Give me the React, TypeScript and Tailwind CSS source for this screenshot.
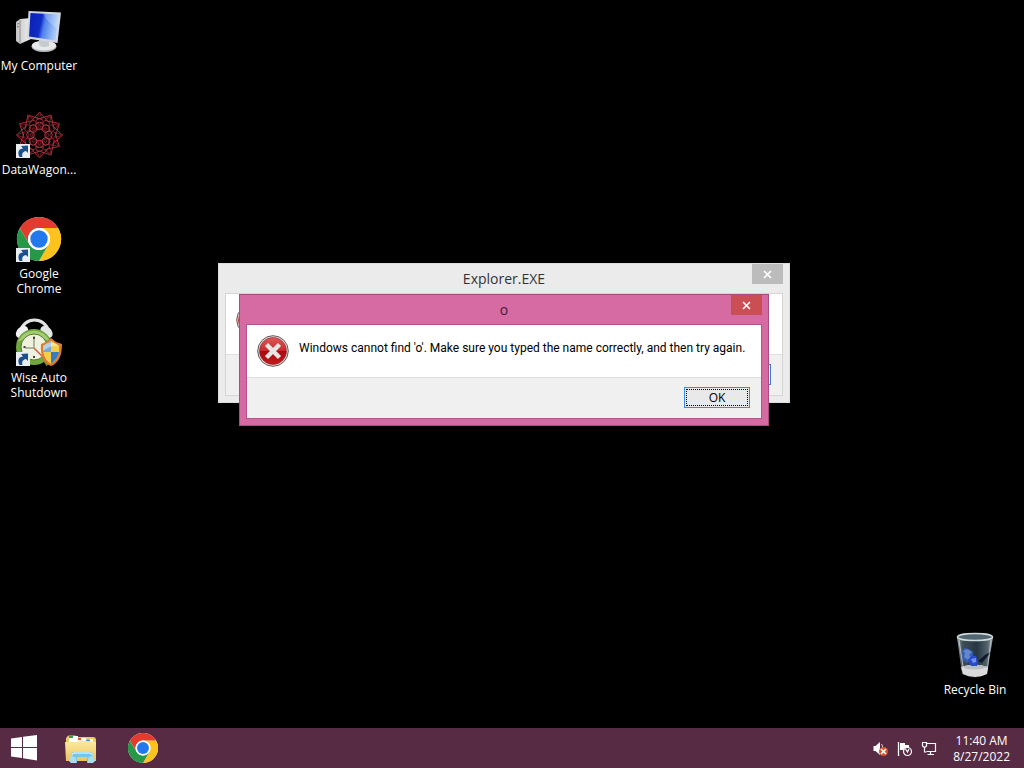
import type { ReactNode } from 'react';

function ShortcutArrow() {
  return (
    <g>
      <rect x="1" y="32" width="14" height="14" fill="#e9eef3" />
      <path d="M4.500 45C2 40 4 36.500 8 36.500L6 34L13 33.500L13 41L11 39C8 39.500 6.500 41.500 7.500 45Z" fill="#1d4f8c" />
    </g>
  );
}

function ComputerIcon() {
  return (
    <svg viewBox="0 0 48 48" className="h-12 w-12" aria-hidden="true">
      <defs>
        <linearGradient id="screen" x1="0" y1="0" x2="1" y2="0.2">
          <stop offset="0" stopColor="#0a1fb4" />
          <stop offset="0.45" stopColor="#0f2cc4" />
          <stop offset="0.58" stopColor="#4f80ea" />
          <stop offset="1" stopColor="#a9cdfb" />
        </linearGradient>
        <linearGradient id="tower" x1="0" y1="0" x2="1" y2="0">
          <stop offset="0" stopColor="#c4c4c4" />
          <stop offset="1" stopColor="#f0f0f0" />
        </linearGradient>
      </defs>
      <path d="M1 14L5 11L16 10L16 31L5 36L1 33Z" fill="url(#tower)" />
      <path d="M5 12V36" stroke="#8e8e8e" strokeWidth="1" />
      <path d="M2 16L4 15.500M2 19L4 18.500" stroke="#777" />
      <ellipse cx="29" cy="38.500" rx="12.500" ry="5.500" fill="#b9bcbf" />
      <ellipse cx="29" cy="37.500" rx="12" ry="4.800" fill="#e6e8e9" />
      <path d="M24 31L34 32L34 38C30 40 26 39 24 37Z" fill="#c8cbce" />
      <path d="M13.500 3L46 4.500L42.500 35L12 30.500Z" fill="#d3d7e4" />
      <path d="M15.500 5L43.500 6.500L40.500 32.500L14 28.500Z" fill="url(#screen)" />
      <path d="M28 5.700L43.500 6.500L42 20Q34 16 28 5.700Z" fill="#fff" opacity=".22" />
    </svg>
  );
}

const rosetteAngles = [0, 30, 60, 90, 120, 150, 180, 210, 240, 270, 300, 330];

function RosetteIcon() {
  return (
    <svg viewBox="0 0 48 48" className="h-12 w-12 overflow-visible" aria-hidden="true">
      <g fill="none" stroke="#b8323f" strokeWidth="0.9" transform="translate(24.5 23)">
        {rosetteAngles.map((a) => (
          <g key={a} transform={`rotate(${a})`}>
            <path d="M-10-12L0-23L10-12" />
            <path d="M0-23L-5-9M0-23L5-9" stroke="#7d1f2b" />
          </g>
        ))}
        {[0, 45, 90, 135, 180, 225, 270, 315].map((a) => (
          <g key={a} transform={`rotate(${a})`}>
            <circle r="3.800" cx="0" cy="-9" stroke="#c03c48" />
            <circle r="1.500" cx="0" cy="-8" stroke="#93232f" />
          </g>
        ))}
      </g>
      <circle cx="24.500" cy="23" r="3.500" fill="#090203" />
      <ShortcutArrow />
    </svg>
  );
}

function ChromeArt() {
  return (
    <g>
      <circle cx="24" cy="23" r="22" fill="#fff" />
      <path d="M24 12H43.100A22 22 0 0 1 24 45L33.500 28.500A11 11 0 0 0 24 12Z" fill="#fcc31e" />
      <path d="M4.900 12L14.500 28.500A11 11 0 0 0 33.500 28.500L24 45A22 22 0 0 1 4.900 12Z" fill="#269847" />
      <path d="M24 12H43.100A22 22 0 0 0 4.900 12L14.500 28.500A11 11 0 0 1 24 12Z" fill="#e33b2e" />
      <circle cx="24" cy="23" r="11" fill="#fff" />
      <circle cx="24" cy="23" r="8.700" fill="#2478ed" />
    </g>
  );
}

function ClockIcon() {
  return (
    <svg viewBox="0 0 48 48" className="h-12 w-12 overflow-visible" aria-hidden="true">
      <path d="M5 12C9-4 30-4 34 12" fill="none" stroke="#dfe3e4" strokeWidth="3" />
      <ellipse cx="7" cy="12" rx="7" ry="5" transform="rotate(-42 7 12)" fill="#f1f3f3" />
      <ellipse cx="31.500" cy="12" rx="7" ry="5" transform="rotate(42 31.500 12)" fill="#e3e7e7" />
      <path d="M30 40L33 45" stroke="#668e35" strokeWidth="4" />
      <circle cx="19" cy="27" r="18" fill="#72a63e" />
      <path d="M3 22A17 17 0 0 1 35 22Q20 12 3 22Z" fill="#a4cc73" />
      <circle cx="19" cy="27" r="13" fill="#f1f1df" stroke="#557d2e" />
      <path d="M19 16V28H10" fill="none" stroke="#96a48b" strokeWidth="1.500" />
      <path d="M19 28L28 37" stroke="#d35c45" strokeWidth="1.500" />
      <path d="M19 17V19M8.500 27H10.500M19 36V38M28 27H30" stroke="#444" strokeWidth="2" />
      <path d="M36 18L41 22L47 24C47 35 44 43 36 46C29 43 25 36 26 24L31 22Z" fill="#df7c28" />
      <path d="M36 21L44 26C44 34 42 40 36 43.500C30 40 28 34 28 26Z" fill="#f6e8ab" />
      <path d="M36 21L28 26V32H36ZM36 32V43.500C41 40 43 36 44 32Z" fill="#79a9d2" />
      <path d="M36 32V43.500C41 40 43 36 44 32Z" fill="#3979bd" />
      <path d="M36 21L44 26V32H36ZM28.500 32H36V43.500C31 40 29 36 28.500 32Z" fill="#f4ce48" />
      <path d="M28 26Q36 19 44 26Q36 25 28 31Z" fill="#fff" opacity=".45" />
      <ShortcutArrow />
    </svg>
  );
}

function BinIcon() {
  return (
    <svg viewBox="0 0 48 48" className="h-12 w-12" aria-hidden="true">
      <defs>
        <linearGradient id="glass" x1="0" y1="0" x2="1" y2="0">
          <stop offset="0" stopColor="#9ba6ab" />
          <stop offset=".16" stopColor="#3f4d57" />
          <stop offset=".55" stopColor="#263642" />
          <stop offset=".84" stopColor="#52616b" />
          <stop offset="1" stopColor="#a4abb0" />
        </linearGradient>
      </defs>
      <path d="M6 5L11 42Q24 49 36 42L42 5Z" fill="url(#glass)" />
      <ellipse cx="24" cy="5" rx="17.500" ry="3.500" fill="#526772" stroke="#d0dadd" strokeWidth="1.500" />
      <path d="M10 35Q23 30 37 35L36 42Q24 48 12 42Z" fill="#dadada" />
      <path d="M10 35Q23 30 37 35Q23 40 10 35Z" fill="#b9bec2" />
      <path d="M10 20L13 16L18 17L22 20L22 27L16 31L10 27Z" fill="#365cad" />
      <path d="M12 19L16 17L21 20L18 23L22 26L17 28L13 25L14 21Z" fill="#6287ce" />
      <path d="M17 28L20 24L25 24L27 29L26 34L20 34Z" fill="#294dca" />
      <path d="M20 27L25 26L25 30L22 31Z" fill="#6f92ee" />
      <path d="M41 19L34 23L27 29L31 31Z" fill="#101929" />
      <path d="M8 8L13 41" stroke="#dce3e6" strokeWidth="1" opacity=".7" />
      <path d="M40 8L36 39" stroke="#dce3e6" strokeWidth="1" opacity=".6" />
    </svg>
  );
}

function FolderIcon() {
  return (
    <svg viewBox="0 0 34 32" className="h-8 w-[34px]" aria-hidden="true">
      <defs>
        <linearGradient id="folder" x1="0" y1="0" x2="0" y2="1">
          <stop offset="0" stopColor="#ffeaa2" />
          <stop offset="1" stopColor="#e7c560" />
        </linearGradient>
      </defs>
      <path d="M3 5Q3 3.500 5 3.500H11L14 5H29Q32 5 32 8V28H2V6Z" fill="#e9c968" />
      <path d="M5 4H14V10H5Z" fill="#fff" />
      <path d="M5 4H9V6H5Z" fill="#3d9a44" />
      <path d="M13 6H22V10H13Z" fill="#fff8e0" />
      <path d="M14 6H17V8H14Z" fill="#d85b34" />
      <path d="M18 7H29V11H18Z" fill="#fff" />
      <path d="M22 7.500H26V9.500H22Z" fill="#4294cc" />
      <path d="M1 10H14L16 8.500L32 10L32 29H2Z" fill="url(#folder)" />
      <path d="M7 23Q7 20 10 20H26Q29 20 29 23V31H23V25H13V31H7Z" fill="#79c5e5" />
      <path d="M8 23Q8 21 11 21H25Q28 21 28 23" fill="none" stroke="#c6edf8" strokeWidth="1.500" />
      <path d="M7 23L5 29L7 31H12V26Z" fill="#a7dded" />
      <path d="M29 23L31 29L29 31H24V26Z" fill="#a7dded" />
    </svg>
  );
}

function StartIcon() {
  return (
    <svg viewBox="0 0 26 26" className="h-[26px] w-[26px]" aria-hidden="true">
      <path d="M0 3.500L11 2V12H0ZM12 1.800L26 0V12H12ZM0 13H11V23L0 21.500ZM12 13H26V25.500L12 23.300Z" fill="#fff" />
    </svg>
  );
}

function VolumeIcon() {
  return (
    <svg viewBox="0 0 16 16" className="h-4 w-4" aria-hidden="true">
      <path d="M0.500 5H2.500L7 1V14L2.500 10H0.500Z" fill="#fff" />
      <path d="M8.500 3Q10 5 9.500 7" fill="none" stroke="#dcc" />
      <circle cx="10.500" cy="10.500" r="4.500" fill="#d4552c" />
      <path d="M8 8L13 13M13 8L8 13" stroke="#fff" strokeWidth="1.500" />
    </svg>
  );
}

function FlagIcon() {
  return (
    <svg viewBox="0 0 16 16" className="h-4 w-4" aria-hidden="true">
      <path d="M1.500 1V15" stroke="#fff" strokeWidth="1.300" />
      <path d="M3 2H8V4H12V7H7.500L6.500 9H3Z" fill="#fff" />
      <circle cx="10.500" cy="10.500" r="4" fill="#5b2c47" stroke="#fff" strokeWidth="1.200" />
      <path d="M8.500 8L10.500 11L12 8" fill="none" stroke="#fff" strokeWidth="1.200" />
    </svg>
  );
}

function NetworkIcon() {
  return (
    <svg viewBox="0 0 16 16" className="h-4 w-4" aria-hidden="true">
      <path d="M6 2.500H14.500V10.500H5.500M9.500 10.500V13M6.500 13.500H13" fill="none" stroke="#fff" strokeWidth="1.200" />
      <path d="M1.500 1.500H5.500V5L4.500 6H2.500L1.500 5ZM3.500 6V11H5.500" fill="none" stroke="#fff" strokeWidth="1.200" />
    </svg>
  );
}

function ErrorIcon() {
  return (
    <svg viewBox="0 0 32 32" className="h-8 w-8 shrink-0" role="img" aria-label="Error">
      <defs>
        <linearGradient id="error" x1="0" y1="0" x2="0" y2="1">
          <stop offset="0" stopColor="#df5856" />
          <stop offset=".48" stopColor="#c92c31" />
          <stop offset=".5" stopColor="#a70912" />
          <stop offset="1" stopColor="#c51a1c" />
        </linearGradient>
      </defs>
      <circle cx="16" cy="16" r="15.300" fill="#e5dada" stroke="#6d5557" />
      <circle cx="16" cy="16" r="13.500" fill="url(#error)" stroke="#8c2328" strokeWidth=".6" />
      <path d="M9.500 9.500L22.500 22.500M22.500 9.500L9.500 22.500" stroke="#e8e6e3" strokeWidth="4.500" />
    </svg>
  );
}

function CloseGlyph() {
  return (
    <svg viewBox="0 0 9 9" className="h-[9px] w-[9px]" aria-hidden="true">
      <path d="M1 1L8 8M8 1L1 8" stroke="#fff" strokeWidth="1.600" />
    </svg>
  );
}

function DesktopItem({ label, children }: { label: string; children: ReactNode }) {
  return (
    <button type="button" className="flex h-[104px] w-[78px] flex-col items-center gap-[2px] pt-2 text-xs leading-[15px] text-white">
      {children}
      <span className="text-center">{label}</span>
    </button>
  );
}

export default function App() {
  return (
    <div className="relative flex min-h-screen flex-col bg-black font-['Open_Sans','Noto_Sans',sans-serif]">
      <main className="flex grow justify-between">
        <nav aria-label="Desktop" className="flex flex-col">
          <DesktopItem label="My Computer"><ComputerIcon /></DesktopItem>
          <DesktopItem label="DataWagon..."><RosetteIcon /></DesktopItem>
          <DesktopItem label="Google Chrome">
            <svg viewBox="0 0 48 48" className="h-12 w-12" aria-hidden="true"><ChromeArt /><ShortcutArrow /></svg>
          </DesktopItem>
          <DesktopItem label="Wise Auto Shutdown"><ClockIcon /></DesktopItem>
        </nav>
        <div className="flex items-end pr-[10px]">
          <DesktopItem label="Recycle Bin"><BinIcon /></DesktopItem>
        </div>
      </main>

      <section aria-label="Explorer.EXE" className="absolute top-[263px] left-[218px] flex h-[140px] w-[572px] flex-col border border-[#dcdcdc] bg-[#ebebeb] px-[6px] pb-[6px]">
        <header className="grid h-[29px] shrink-0 grid-cols-[31px_1fr_31px]">
          <h2 className="col-start-2 self-center text-center text-sm text-[#333]">Explorer.EXE</h2>
          <button type="button" aria-label="Close Explorer.EXE" className="flex h-5 items-center justify-center bg-[#bcbcbc]"><CloseGlyph /></button>
        </header>
        <div className="flex grow flex-col border border-[#d5d5d5] bg-white">
          <div className="flex grow items-start px-[10px] pt-[10px]"><ErrorIcon /></div>
          <div className="flex h-[41px] items-start justify-end border-t border-[#dfdfdf] bg-[#f0f0f0] px-[11px] pt-[9px]">
            <span className="h-[21px] w-[66px] border border-[#3c7fcf] bg-[#e8e8e8]" />
          </div>
        </div>
      </section>

      <section role="dialog" aria-label="o" className="absolute top-[294px] left-[239px] flex h-[132px] w-[530px] flex-col border border-[#a94d80] bg-[#d66aa3] px-[6px] pb-[6px]">
        <header className="grid h-[29px] shrink-0 grid-cols-[31px_1fr_31px]">
          <h1 className="col-start-2 self-center text-center text-sm text-[#471a36]">o</h1>
          <button type="button" aria-label="Close" className="flex h-5 items-center justify-center bg-[#c94f54]"><CloseGlyph /></button>
        </header>
        <div className="flex grow flex-col border border-[#b65389] bg-white">
          <div className="flex grow items-start gap-[10px] px-[10px] pt-[10px]">
            <ErrorIcon />
            <p className="pt-[5px] font-['Roboto',sans-serif] text-xs whitespace-nowrap text-black">Windows cannot find 'o'. Make sure you typed the name correctly, and then try again.</p>
          </div>
          <div className="flex h-[41px] items-start justify-end border-t border-[#dfdfdf] bg-[#f0f0f0] px-[11px] pt-[9px]">
            <button type="button" className="h-[21px] w-[66px] border border-[#3c8ddc] bg-[#e9e9e9] p-px text-xs">
              <span className="flex h-full items-center justify-center border border-dotted border-black">OK</span>
            </button>
          </div>
        </div>
      </section>

      <footer className="flex h-10 items-center justify-between bg-[#582b45] text-white">
        <div className="flex items-center">
          <button type="button" aria-label="Start" className="flex w-12 justify-center"><StartIcon /></button>
          <button type="button" aria-label="File Explorer" className="flex w-[66px] justify-center"><FolderIcon /></button>
          <button type="button" aria-label="Google Chrome" className="flex w-[58px] justify-center">
            <svg viewBox="2 1 44 44" className="h-[30px] w-[30px]" aria-hidden="true"><ChromeArt /></svg>
          </button>
        </div>
        <div className="flex items-center gap-2 pt-[2px] pr-[14px]">
          <button type="button" aria-label="Volume muted"><VolumeIcon /></button>
          <button type="button" aria-label="Notifications"><FlagIcon /></button>
          <button type="button" aria-label="Network"><NetworkIcon /></button>
          <button type="button" className="ml-2 text-center text-xs leading-4">
            <span className="block">11:40 AM</span>
            <span className="block">8/27/2022</span>
          </button>
        </div>
      </footer>
    </div>
  );
}
